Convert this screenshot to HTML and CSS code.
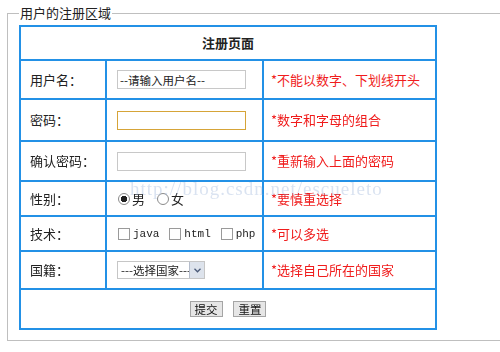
FILE: index.html
```html
<!DOCTYPE html>
<html lang="zh-CN">
<head>
    <meta charset="UTF-8">
    <title>用户注册</title>
    <link rel="stylesheet" href="styles.css">
</head>
<body>

<form class="reg-form">
    <fieldset class="reg-area">
        <legend>用户的注册区域</legend>
        <table class="reg-table">
            <colgroup>
                <col class="col-label">
                <col class="col-field">
                <col class="col-tip">
            </colgroup>
            <tr class="row-head">
                <th colspan="3">注册页面</th>
            </tr>
            <tr class="row-user">
                <td class="label">用户名：</td>
                <td class="field"><input type="text" class="text-box" value="--请输入用户名--"></td>
                <td class="tip">*不能以数字、下划线开头</td>
            </tr>
            <tr class="row-pass">
                <td class="label">密码：</td>
                <td class="field"><input type="password" class="text-box focus" autofocus></td>
                <td class="tip">*数字和字母的组合</td>
            </tr>
            <tr class="row-confirm">
                <td class="label">确认密码：</td>
                <td class="field"><input type="password" class="text-box"></td>
                <td class="tip">*重新输入上面的密码</td>
            </tr>
            <tr class="row-sex">
                <td class="label">性别：</td>
                <td class="field">
                    <label class="opt"><input type="radio" name="sex" checked>男</label>
                    <label class="opt"><input type="radio" name="sex">女</label>
                </td>
                <td class="tip">*要慎重选择</td>
            </tr>
            <tr class="row-tech">
                <td class="label">技术：</td>
                <td class="field">
                    <label class="opt latin"><input type="checkbox">java</label>
                    <label class="opt latin"><input type="checkbox">html</label>
                    <label class="opt latin"><input type="checkbox">php</label>
                </td>
                <td class="tip">*可以多选</td>
            </tr>
            <tr class="row-country">
                <td class="label">国籍：</td>
                <td class="field">
                    <span class="select-wrap">
                        <select class="country">
                            <option>---选择国家---</option>
                            <option>中国</option>
                            <option>美国</option>
                            <option>日本</option>
                        </select>
                        <span class="select-arrow">
                            <svg width="7" height="5" viewBox="0 0 7 5"><path d="M0.5 0.8 L3.5 3.8 L6.5 0.8" fill="none" stroke="#4a5a78" stroke-width="1.3"/></svg>
                        </span>
                    </span>
                </td>
                <td class="tip">*选择自己所在的国家</td>
            </tr>
            <tr class="row-submit">
                <td colspan="3">
                    <input type="submit" class="btn" value="提交">
                    <input type="reset" class="btn" value="重置">
                </td>
            </tr>
        </table>
        <div class="watermark">http://blog.csdn.net/escueleto</div>
    </fieldset>
</form>

</body>
</html>
```

FILE: styles.css
```css
html, body {
    overflow: hidden;
}
body {
    margin: 0;
    padding: 0;
    background-color: #fff;
    font-family: "Noto Sans CJK SC", "Noto Sans", sans-serif;
    font-size: 13px;
    color: #222;
}
.reg-form {
    width: 495px;
    padding: 6px 0 0 7px;
}
.reg-area {
    position: relative;
    margin: 0;
    padding: 5px 0 8px 11px;
    border: 1px solid #bfbfbf;
    border-right: none;
    height: 320px;
}
.reg-area legend {
    margin-left: 0;
    padding: 0 1px;
    font-size: 13px;
    line-height: 14px;
    color: #222;
}
.reg-table {
    border-collapse: collapse;
    width: 416px;
    table-layout: fixed;
}
.col-label { width: 86px; }
.col-field { width: 157px; }
.col-tip { width: 173px; }
.reg-table th,
.reg-table td {
    border: 2px solid #2391e6;
    padding: 0;
    line-height: 16px;
}
.reg-table th {
    font-weight: bold;
    font-size: 13px;
    text-align: center;
}
.reg-table td.label {
    padding-left: 9px;
}
.reg-table td.field {
    padding-left: 10px;
    white-space: nowrap;
}
.reg-table td.tip {
    padding-left: 7px;
    color: #f01c1c;
    white-space: nowrap;
}
.row-head th { height: 32px; }
.row-user td { height: 37px; }
.row-pass td { height: 40px; }
.row-confirm td { height: 38px; }
.row-sex td { height: 33px; }
.row-tech td { height: 33px; }
.row-country td { height: 36px; }
.row-submit td {
    height: 38px;
    text-align: center;
    padding-left: 0;
}
.text-box {
    box-sizing: border-box;
    width: 129px;
    height: 19px;
    margin: 0;
    padding: 0 2px;
    border: 1px solid #c8c8c8;
    font-family: "Noto Sans CJK SC", sans-serif;
    font-size: 11.5px;
    color: #222;
    outline: none;
    vertical-align: middle;
}
.text-box.focus,
.text-box.focus:focus {
    border: 1px solid #d6a438;
    caret-color: #000;
}
.opt {
    display: inline-flex;
    align-items: center;
    margin-right: 8px;
    vertical-align: middle;
}
.opt input[type="radio"] {
    appearance: none;
    box-sizing: border-box;
    width: 12px;
    height: 12px;
    margin: 0 2px 0 1px;
    border: 1px solid #8a8a8a;
    border-radius: 50%;
    background-color: #fff;
}
.opt input[type="radio"]:checked {
    background: radial-gradient(circle, #222 0, #222 3px, #fff 3.5px);
}
.opt.latin {
    font-family: "Liberation Mono", monospace;
    font-size: 11px;
    margin-right: 6px;
}
.opt input[type="checkbox"] {
    appearance: none;
    box-sizing: border-box;
    width: 12px;
    height: 12px;
    margin: 0 3px 0 1px;
    border: 1px solid #9a9a9a;
    background-color: #fff;
}
.select-wrap {
    display: inline-flex;
    align-items: stretch;
    height: 16px;
    border: 1px solid #c6c6c6;
    vertical-align: middle;
}
.country {
    appearance: none;
    width: 71px;
    margin: 0;
    padding: 0 0 0 3px;
    border: none;
    font-family: "Noto Sans CJK SC", sans-serif;
    font-size: 11.5px;
    color: #222;
    background-color: #fff;
    outline: none;
}
.select-arrow {
    display: flex;
    align-items: center;
    justify-content: center;
    width: 14px;
    background-color: #dde3ec;
    border-left: 1px solid #b4bccb;
}
.btn {
    box-sizing: border-box;
    height: 16px;
    margin: 0 4px;
    padding: 0 4px;
    border: 1px solid #a5a5a5;
    background-color: #e6e6e6;
    font-family: "Noto Sans CJK SC", sans-serif;
    font-size: 11.5px;
    line-height: 14px;
    color: #111;
}
.watermark {
    position: absolute;
    left: 122px;
    top: 158px;
    font-family: "Liberation Serif", serif;
    font-size: 19px;
    letter-spacing: 1px;
    color: rgba(150, 175, 215, 0.35);
    pointer-events: none;
}
```
